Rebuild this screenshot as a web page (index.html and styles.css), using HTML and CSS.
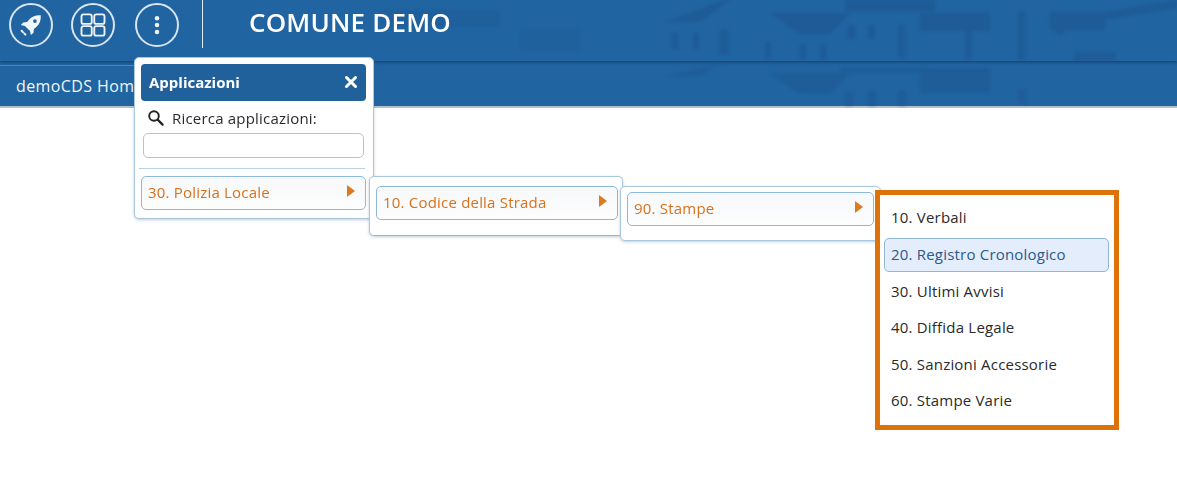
FILE: index.html
```html
<!DOCTYPE html>
<html lang="it">
<head>
<meta charset="utf-8">
<title>Comune Demo</title>
<link rel="stylesheet" href="styles.css">
</head>
<body>
<header class="topbar">
  <svg class="texture" viewBox="0 0 1177 61" preserveAspectRatio="none" aria-hidden="true">
    <g fill="#1d4f86" opacity=".38">
      <polygon points="665,22 725,0 730,0 700,22"/><polygon points="770,13 850,13 830,34 800,34"/><rect x="845" y="0" width="90" height="12"/><rect x="920" y="13" width="70" height="18"/><rect x="1050" y="12" width="55" height="18"/>
      <rect x="672" y="33" width="6" height="16"/><rect x="693" y="33" width="6" height="16"/><rect x="720" y="30" width="8" height="25"/><rect x="765" y="42" width="6" height="16"/><rect x="800" y="45" width="6" height="14"/><rect x="820" y="45" width="6" height="14"/><rect x="848" y="25" width="7" height="14"/><rect x="868" y="25" width="7" height="14"/><rect x="898" y="25" width="7" height="32"/><rect x="965" y="28" width="7" height="30"/><rect x="1018" y="12" width="7" height="48"/>
      <rect x="1056" y="18" width="8" height="16"/><rect x="1075" y="52" width="40" height="9"/><polygon points="1045,22 1177,0 1177,8 1090,22"/><rect x="380" y="10" width="120" height="16" opacity=".5"/><rect x="520" y="30" width="60" height="20" opacity=".4"/>
    </g>
  </svg>
  <button class="round-btn" type="button" aria-label="Applicazioni">
    <svg viewBox="0 0 24 24" class="ico ico-rocket"><path fill="#f2f6fa" d="M21 3c-4.500-.4-8.300 1.100-10.800 4.100L8.400 9.300l-3.600.4-2.100 2.400 3.700.8 4.700 4.700.8 3.700 2.400-2.100.4-3.600 2.200-1.800C19.900 11.300 21.400 7.500 21 3z"/><circle cx="15.600" cy="8.400" r="1.700" fill="#2064a2"/><path fill="none" stroke="#f2f6fa" stroke-width="1.800" stroke-linecap="round" stroke-dasharray="1.800 1.800" d="M3.300 17.300l3.600 3.600"/></svg>
  </button>
  <button class="round-btn" type="button" aria-label="Moduli">
    <svg viewBox="0 0 24 24" class="ico"><g fill="none" stroke="#eef3f8" stroke-width="1.500"><rect x="2.800" y="3.500" width="8.200" height="7.600" rx="1.600"/><rect x="13" y="3.500" width="8.200" height="7.600" rx="1.600"/><rect x="2.800" y="12.900" width="8.200" height="7.600" rx="1.600"/><rect x="13" y="12.900" width="8.200" height="7.600" rx="1.600"/></g></svg>
  </button>
  <button class="round-btn" type="button" aria-label="Menu">
    <svg viewBox="0 0 24 24" class="ico"><g fill="#eef3f8"><circle cx="12" cy="6.500" r="1.800"/><circle cx="12" cy="12" r="1.800"/><circle cx="12" cy="17.500" r="1.800"/></g></svg>
  </button>
  <span class="divider"></span>
  <h1 class="title">COMUNE DEMO</h1>
</header>
<nav class="tabbar">
  <svg class="texture" viewBox="0 0 1177 44" preserveAspectRatio="none" aria-hidden="true">
    <g fill="#1d4f86" opacity=".34">
      <polygon points="665,15 725,2 720,2 700,15"/><polygon points="770,12 850,12 830,32 800,32"/><rect x="840" y="7" width="90" height="4"/><rect x="920" y="7" width="70" height="24"/><rect x="845" y="30" width="8" height="14"/><rect x="868" y="30" width="8" height="14"/><rect x="898" y="28" width="8" height="16"/><rect x="1018" y="28" width="8" height="14"/>
    </g>
  </svg>
  <div class="tab">demoCDS Home</div>
</nav>

<section class="popup popup-apps">
  <div class="popup-head"><span>Applicazioni</span>
    <svg class="close" viewBox="0 0 12 12" aria-label="Chiudi"><path d="M1.500 1.500l9 9M10.500 1.500l-9 9" stroke="#fff" stroke-width="3" stroke-linecap="round"/></svg>
  </div>
  <label class="search-label" for="app-search">
    <svg viewBox="0 0 18 18" class="search-ico"><circle cx="7" cy="7" r="4.800" fill="none" stroke="#222" stroke-width="1.900"/><path d="M10.600 10.600l5 5" stroke="#222" stroke-width="2.200" stroke-linecap="round"/></svg>
    Ricerca applicazioni:
  </label>
  <input id="app-search" class="search-input" type="text">
  <hr class="sep">
  <div class="item">30. Polizia Locale<span class="caret"></span></div>
</section>

<section class="popup popup-two">
  <div class="item">10. Codice della Strada<span class="caret"></span></div>
</section>

<section class="popup popup-three">
  <div class="item">90. Stampe<span class="caret"></span></div>
</section>

<section class="popup-last">
  <ul class="list">
    <li class="row">10. Verbali</li>
    <li class="row row-active">20. Registro Cronologico</li>
    <li class="row">30. Ultimi Avvisi</li>
    <li class="row">40. Diffida Legale</li>
    <li class="row">50. Sanzioni Accessorie</li>
    <li class="row">60. Stampe Varie</li>
  </ul>
</section>
</body>
</html>
```
FILE: styles.css
```css
* { box-sizing: border-box; }
html, body { margin: 0; height: 100%; }
body {
  position: relative;
  background: #fff;
  font-family: "Open Sans", "Noto Sans", sans-serif;
  font-size: 15px;
  color: #2a2a2a;
  overflow: hidden;
}
.texture { position: absolute; inset: 0; width: 100%; height: 100%; filter: blur(1.5px); }
.topbar {
  position: relative;
  height: 61px;
  background: #2064a2;
  display: flex;
  align-items: flex-start;
  padding: 3px 0 0 9px;
  box-shadow: 0 1px 3px rgba(20, 50, 90, .8);
  z-index: 1;
}
.round-btn {
  position: relative;
  flex: none;
  width: 44px;
  height: 44px;
  border: 2px solid #d9e5ef;
  border-radius: 50%;
  background: transparent;
  padding: 0;
  margin-right: 18px;
  display: flex;
  align-items: center;
  justify-content: center;
}
.round-btn:nth-of-type(2) { margin-right: 20px; }
.ico { width: 30px; height: 30px; }
.ico-rocket { width: 26px; height: 26px; }
.divider {
  position: relative;
  width: 1px;
  height: 48px;
  margin: -3px 0 0 5px;
  background: #e3edf5;
}
.title {
  position: relative;
  margin: 1px 0 0 46px;
  font-size: 26px;
  letter-spacing: .2px;
  line-height: 36px;
  font-weight: 600;
  color: #fff;
  white-space: nowrap;
}
.tabbar {
  position: relative;
  height: 47px;
  background: #2064a2;
  border-bottom: 2px solid #b4c0c8;
  padding: 4px 0 0 0;
  display: flex;
}
.tab {
  position: relative;
  width: 170px;
  border: 1px solid #4f86b8;
  border-bottom: 0;
  border-left: 0;
  border-radius: 0 4px 0 0;
  padding: 9px 0 0 16px;
  font-size: 16px;
  letter-spacing: .4px;
  line-height: 22px;
  color: #f1f6fa;
  white-space: nowrap;
}
.popup {
  position: absolute;
  background: #fff;
  border: 1px solid #a9c8e0;
  border-radius: 5px;
  padding: 6px;
  box-shadow: 0 1px 3px rgba(80, 110, 140, .35);
  z-index: 2;
}
.popup-apps { left: 134px; top: 57px; width: 240px; height: 162px; padding-right: 7px; }
.popup-two { left: 369px; top: 176px; width: 254px; height: 60px; padding: 9px 4px 0 6px; border-bottom-color: #9db9d1; z-index: 3; }
.popup-three { left: 620px; top: 186px; width: 261px; height: 55px; padding-top: 5px; z-index: 4; }
.popup-head {
  height: 37px;
  background: #20619c;
  border-radius: 4px;
  padding: 0 9px 2px 8px;
  color: #fff;
  font-size: 15px;
  font-weight: 700;
  display: flex;
  align-items: center;
  justify-content: space-between;
}
.close { width: 12px; height: 12px; }
.search-label {
  display: flex;
  align-items: center;
  gap: 7px;
  height: 20px;
  margin: 7px 0 0 6px;
  font-size: 15px;
  letter-spacing: .2px;
  line-height: 20px;
  color: #2a2a2a;
}
.search-ico { width: 18px; height: 18px; }
.search-input {
  display: block;
  width: 221px;
  height: 25px;
  margin: 5px 0 0 2px;
  border: 1px solid #a9c8e0;
  border-radius: 5px;
  background: #fff;
}
.sep { border: 0; border-top: 1px solid #b9d0e2; margin: 10px 1px 7px -2px; }
.item {
  height: 34px;
  border: 1px solid #8db8d8;
  border-radius: 5px;
  background: linear-gradient(#f6f8fb, #fdfdfd);
  padding: 0 10px 2px 6px;
  color: #d9701a;
  font-size: 15px;
  letter-spacing: .2px;
  display: flex;
  align-items: center;
  justify-content: space-between;
}
.caret {
  width: 0;
  height: 0;
  margin-bottom: 3px;
  border-left: 8px solid #dd7a1e;
  border-top: 6px solid transparent;
  border-bottom: 6px solid transparent;
}
.popup-last {
  position: absolute;
  left: 875px;
  top: 190px;
  width: 244px;
  height: 240px;
  border: 5px solid #dd7209;
  background: #fff;
  z-index: 5;
}
.list { list-style: none; margin: 0; padding: 6.4px 5px 0 4px; }
.row {
  height: 34px;
  margin-bottom: 2.6px;
  border: 1px solid transparent;
  border-radius: 5px;
  padding: 0 6px;
  line-height: 31px;
  font-size: 15px;
  letter-spacing: .2px;
  color: #2a2a2a;
}
.row-active {
  background: #e3edfb;
  border-color: #8db8d8;
  color: #2b5a8c;
}
```
